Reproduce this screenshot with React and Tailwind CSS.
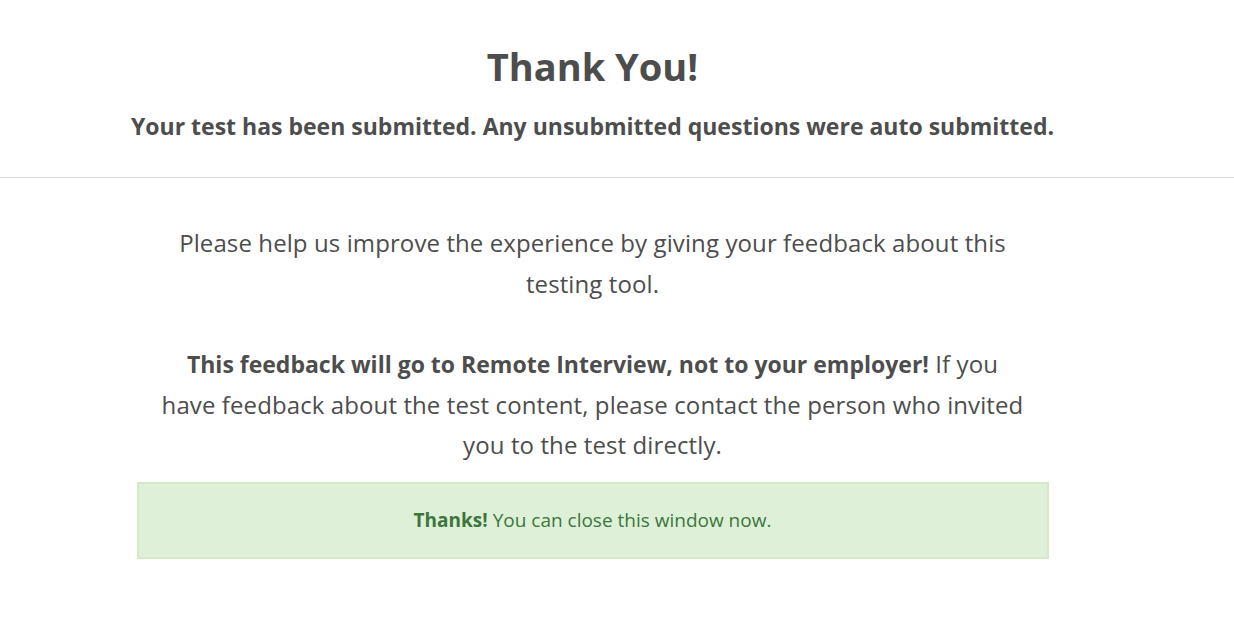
export default function App() {
  return (
    <div className="min-h-screen bg-white text-[#4d4d4d]" style={{ fontFamily: '"Open Sans", "Noto Sans", sans-serif' }}>
      {/* header */}
      <header className="border-b border-[#dddddd] pt-[38px] pb-[36px]">
        <div className="w-[1185px] text-center">
          <h1 className="text-[38px] leading-[56px] font-bold">Thank You!</h1>
          <p className="mt-[17px] text-[23px] leading-[30px] font-bold">
            Your test has been submitted. Any unsubmitted questions were auto submitted.
          </p>
        </div>
      </header>

      {/* feedback */}
      <div className="w-[1185px]">
        <div className="mx-auto w-[912px] pt-[45px]">
          <div className="px-[23px] text-center text-[24px] leading-[40.5px] font-normal tracking-[0.1px]">
            <p>Please help us improve the experience by giving your feedback about this testing tool.</p>
            <p className="mt-[40px]">
              <strong className="font-bold text-[23px] tracking-normal">
                This feedback will go to Remote Interview, not to your employer!
              </strong>{' '}
              If you have feedback about the test content, please contact the person who invited you to the test directly.
            </p>
          </div>
          <div className="mt-[16px] h-[77px] flex items-center justify-center border-2 border-[#d6e9c6] bg-[#dff0d8] text-[#3c763d] text-[19px]">
            <span>
              <strong className="font-bold">Thanks!</strong> You can close this window now.
            </span>
          </div>
        </div>
      </div>
    </div>
  );
}
